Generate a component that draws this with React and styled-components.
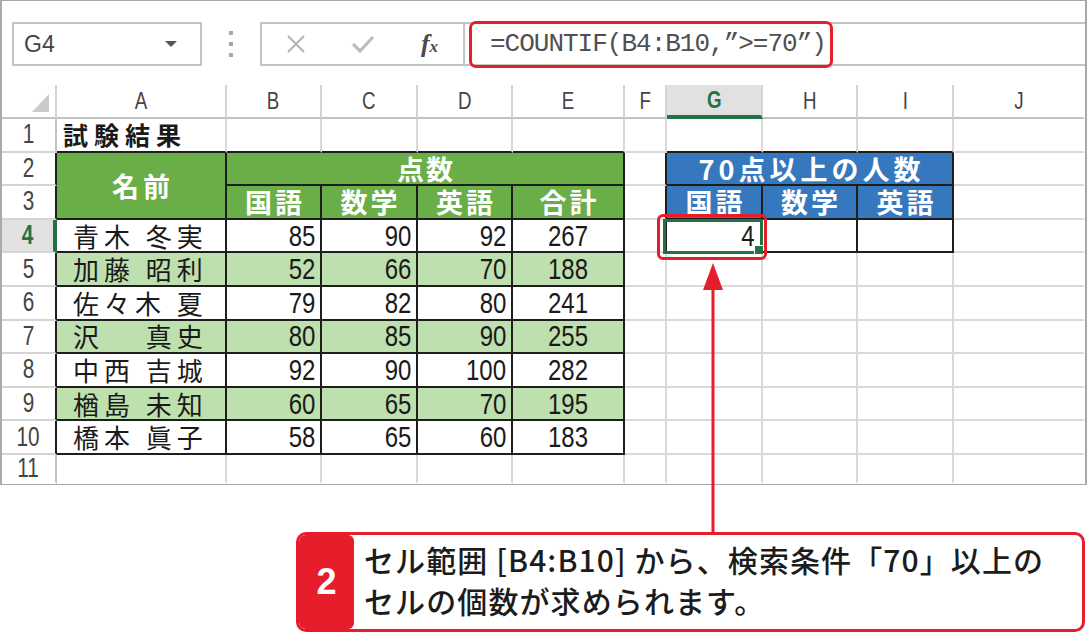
import React from 'react';
import styled, { createGlobalStyle } from 'styled-components';

const GRID = '#d9d9d9';
const INK = '#1e1e1e';
const XL_GREEN = '#217346';
const RED = '#e61e2b';
const GREEN = '#6aae47';
const LIGHT = '#bedfae';
const BLUE = '#3678be';

const GlobalStyle = createGlobalStyle`
  html, body {
    margin: 0;
    padding: 0;
    background: #fff;
  }
  body {
    font-family: "Noto Sans CJK JP", "Noto Sans", sans-serif;
  }
  * {
    box-sizing: border-box;
  }
`;

const Page = styled.div`
  position: relative;
  width: 1087px;
  height: 633px;
  overflow: hidden;
  background: #fff;
`;

const Window = styled.div`
  width: 1087px;
  height: 485px;
  border: 1px solid #a8a8a8;
  border-left: 2px solid #a3aea6;
  border-right: 2px solid #a8a8a8;
  display: flex;
  flex-direction: column;
`;

/* ---------- formula bar ---------- */

const FormulaBar = styled.div`
  display: flex;
  align-items: center;
  height: 44px;
  margin-top: 21px;
  padding-left: 10px;
`;

const NameBox = styled.div`
  width: 190px;
  height: 44px;
  border: 2px solid #c4c4c4;
  display: flex;
  align-items: center;
  justify-content: space-between;
  padding: 0 23px 0 10px;
  font-family: "Liberation Sans", Arial, sans-serif;
  font-size: 23px;
  color: #444;
`;

const Caret = styled.span`
  width: 0;
  height: 0;
  border-left: 6px solid transparent;
  border-right: 6px solid transparent;
  border-top: 6px solid #555;
`;

const Grip = styled.div`
  width: 58px;
  display: flex;
  flex-direction: column;
  align-items: center;
  gap: 7px;
`;

const GripDot = styled.span`
  width: 4px;
  height: 4px;
  background: #a6a6a6;
`;

const FxBox = styled.div`
  width: 205px;
  height: 44px;
  border: 2px solid #c4c4c4;
  display: flex;
  align-items: center;
`;

const FxSlot = styled.div`
  width: 68px;
  display: flex;
  justify-content: center;
  align-items: center;
`;

const FxLabel = styled.span`
  font-family: "Liberation Serif", "Times New Roman", serif;
  font-style: italic;
  font-weight: 700;
  font-size: 26px;
  color: #4a4a4a;

  small {
    font-size: 17px;
  }
`;

const FormulaInput = styled.div`
  flex: 1;
  height: 44px;
  border-top: 2px solid #c4c4c4;
  border-bottom: 2px solid #c4c4c4;
  display: flex;
  align-items: center;
  padding-left: 4px;
`;

const FormulaMark = styled.div`
  width: 364px;
  height: 47px;
  flex-shrink: 0;
  border: 3px solid ${RED};
  border-radius: 7px;
  display: flex;
  align-items: center;
  padding-left: 18px;
  font-family: "Liberation Mono", "Courier New", monospace;
  font-size: 26px;
  letter-spacing: -1px;
  color: #505050;
  white-space: nowrap;
`;

/* ---------- sheet ---------- */

const Sheet = styled.div`
  display: grid;
  grid-template-columns: 55px 170px 95px 96px 95px 112px 42px 96px 95px 96px 131px;
  grid-template-rows: 34px repeat(10, 33.6px) 29px;
  margin-top: 19px;
  color: #222;
`;

const Corner = styled.div`
  display: flex;
  align-items: flex-end;
  justify-content: flex-end;
  padding: 0 6px 5px 0;
  border-right: 2px solid #d4d4d4;
  border-bottom: 2px solid #c2c2c2;

  &::after {
    content: '';
    width: 0;
    height: 0;
    border-left: 17px solid transparent;
    border-bottom: 18px solid #cacaca;
  }
`;

const ColHead = styled.div`
  display: flex;
  align-items: center;
  justify-content: center;
  background: ${({ $active }) => ($active ? '#e1e1e1' : '#fff')};
  border-right: 2px solid ${({ $last }) => ($last ? 'transparent' : '#d4d4d4')};
  border-bottom: ${({ $active }) => ($active ? `4px solid ${XL_GREEN}` : '2px solid #c2c2c2')};
  color: ${({ $active }) => ($active ? XL_GREEN : '#444')};
  font-family: "Liberation Sans", Arial, sans-serif;
  font-weight: ${({ $active }) => ($active ? 700 : 400)};
  font-size: 24px;
`;

const RowHead = styled.div`
  display: flex;
  align-items: center;
  justify-content: center;
  background: ${({ $active }) => ($active ? '#e1e1e1' : '#fff')};
  border-bottom: 2px solid ${({ $b = '#d4d4d4' }) => $b};
  border-right: ${({ $active, $r = '#c2c2c2' }) => ($active ? `4px solid ${XL_GREEN}` : `2px solid ${$r}`)};
  color: ${({ $active }) => ($active ? XL_GREEN : '#444')};
  font-family: "Liberation Sans", Arial, sans-serif;
  font-weight: ${({ $active }) => ($active ? 700 : 400)};
  font-size: 27px;
`;

const Narrow = styled.span`
  display: inline-block;
  line-height: 1;
  transform: scaleX(${({ $x = 0.77 }) => $x});
`;

const Cell = styled.div`
  grid-column: span ${({ $span = 1 }) => $span};
  grid-row: span ${({ $rows = 1 }) => $rows};
  position: relative;
  display: flex;
  align-items: center;
  justify-content: ${({ $align = 'flex-start' }) => $align};
  padding: 0 ${({ $pr = 0 }) => $pr}px 0 ${({ $pl = 0 }) => $pl}px;
  background: ${({ $bg = '#fff' }) => $bg};
  border-right: 2px solid ${({ $r = GRID }) => $r};
  border-bottom: 2px solid ${({ $b = GRID }) => $b};
  white-space: nowrap;
  min-width: 0;
`;

const Title = styled.span`
  font-weight: 700;
  font-size: 25px;
  line-height: 1;
  letter-spacing: 6px;
  color: #1a1a1a;
`;

const HeadText = styled.span`
  font-weight: 700;
  font-size: 27px;
  line-height: 1;
  color: #fff;
  letter-spacing: ${({ $ls = 3 }) => $ls}px;
  padding-left: ${({ $ls = 3 }) => $ls}px;
`;

const Name = styled.span`
  font-size: 26px;
  line-height: 1;
  letter-spacing: 5px;
  color: #1a1a1a;
`;

const Num = styled.span`
  display: inline-block;
  font-family: "Liberation Sans", Arial, sans-serif;
  font-size: 30px;
  line-height: 1;
  color: #1a1a1a;
  transform: scaleX(0.8);
  transform-origin: ${({ $origin = 'right' }) => $origin} center;
`;

/* ---------- annotations ---------- */

const Selection = styled.div`
  position: absolute;
  z-index: 1;
  left: -4px;
  top: -1px;
  right: -2px;
  bottom: -3px;
  border: 3px solid ${XL_GREEN};
  pointer-events: none;
`;

const FillHandle = styled.div`
  position: absolute;
  right: -3px;
  bottom: -3px;
  width: 9px;
  height: 9px;
  background: ${XL_GREEN};
  border-left: 1px solid #fff;
  border-top: 1px solid #fff;
`;

const CellMark = styled.div`
  position: absolute;
  z-index: 2;
  left: -10px;
  top: -6px;
  right: -6px;
  bottom: -9px;
  border: 3px solid ${RED};
  border-radius: 6px;
  pointer-events: none;
`;

const Pointer = styled.svg`
  position: absolute;
  z-index: 3;
  left: 700px;
  top: 261px;
`;

const Callout = styled.div`
  display: flex;
  width: 789px;
  height: 100px;
  margin: 47px 2px 0 auto;
  border: 3px solid ${RED};
  border-radius: 10px;
  overflow: hidden;
  background: #fff;
`;

const StepBadge = styled.div`
  width: 55px;
  flex-shrink: 0;
  background: ${RED};
  border-radius: 0 6px 6px 0;
  color: #fff;
  display: flex;
  align-items: center;
  justify-content: center;
  font-family: "Liberation Sans", Arial, sans-serif;
  font-weight: 700;
  font-size: 36px;
`;

const CalloutText = styled.p`
  margin: 0;
  align-self: center;
  padding: 0 0 4px 10px;
  font-family: "Noto Sans CJK JP", "Noto Sans", sans-serif;
  font-weight: 500;
  font-size: 30px;
  line-height: 41px;
  letter-spacing: 1.1px;
  color: #1c1c1c;
  white-space: nowrap;
`;

const columns = ['A', 'B', 'C', 'D', 'E', 'F', 'G', 'H', 'I', 'J'];

const students = [
  ['青木 冬実', 85, 90, 92, 267],
  ['加藤 昭利', 52, 66, 70, 188],
  ['佐々木 夏', 79, 82, 80, 241],
  ['沢　 真史', 80, 85, 90, 255],
  ['中西 吉城', 92, 90, 100, 282],
  ['楢島 未知', 60, 65, 70, 195],
  ['橋本 眞子', 58, 65, 60, 183],
];

const CrossIcon = () => (
  <svg width="22" height="18" viewBox="0 0 22 18">
    <path d="M3 1 L19 17 M19 1 L3 17" stroke="#b4b4b4" strokeWidth="2" fill="none" />
  </svg>
);

const CheckIcon = () => (
  <svg width="24" height="20" viewBox="0 0 24 20">
    <path d="M2 10 L9 17 L22 3" stroke="#bcbcbc" strokeWidth="3.2" fill="none" />
  </svg>
);

const StudentRow = ({ row, index }) => {
  const [name, ...scores] = row;
  const n = index + 4;
  const bg = index % 2 === 1 ? LIGHT : '#fff';
  const first = index === 0;
  return (
    <>
      <RowHead $r={INK} $active={first}>
        <Narrow>{n}</Narrow>
      </RowHead>
      <Cell $bg={bg} $r={INK} $b={INK} $pl={16}>
        <Name>{name}</Name>
      </Cell>
      {scores.slice(0, 3).map((s, i) => (
        <Cell key={i} $bg={bg} $r={INK} $b={INK} $align="flex-end" $pr={5}>
          <Num>{s}</Num>
        </Cell>
      ))}
      <Cell $bg={bg} $r={INK} $b={INK} $align="center">
        <Num $origin="center">{scores[3]}</Num>
      </Cell>
      <Cell $r={first ? INK : GRID} />
      {first ? (
        <>
          <Cell $r={INK} $b={INK} $align="flex-end" $pr={6}>
            <Num>4</Num>
            <Selection>
              <FillHandle />
            </Selection>
            <CellMark />
          </Cell>
          <Cell $r={INK} $b={INK} />
          <Cell $r={INK} $b={INK} />
        </>
      ) : (
        <>
          <Cell />
          <Cell />
          <Cell />
        </>
      )}
      <Cell $r="transparent" />
    </>
  );
};

const App = () => (
  <Page>
    <GlobalStyle />
    <Window>
      <FormulaBar>
        <NameBox>
          <span>G4</span>
          <Caret />
        </NameBox>
        <Grip>
          <GripDot />
          <GripDot />
          <GripDot />
        </Grip>
        <FxBox>
          <FxSlot>
            <CrossIcon />
          </FxSlot>
          <FxSlot>
            <CheckIcon />
          </FxSlot>
          <FxSlot>
            <FxLabel>
              f<small>x</small>
            </FxLabel>
          </FxSlot>
        </FxBox>
        <FormulaInput>
          <FormulaMark>=COUNTIF(B4:B10,”&gt;=70”)</FormulaMark>
        </FormulaInput>
      </FormulaBar>

      <Sheet>
        <Corner />
        {columns.map((c) => (
          <ColHead key={c} $active={c === 'G'} $last={c === 'J'}>
            <Narrow $x={0.78}>{c}</Narrow>
          </ColHead>
        ))}

        {/* row 1 */}
        <RowHead>
          <Narrow>1</Narrow>
        </RowHead>
        <Cell $b={INK} $pl={6}>
          <Title>試験結果</Title>
        </Cell>
        <Cell $b={INK} />
        <Cell $b={INK} />
        <Cell $b={INK} />
        <Cell $b={INK} />
        <Cell />
        <Cell $b={INK} />
        <Cell $b={INK} />
        <Cell $b={INK} />
        <Cell $r="transparent" />

        {/* row 2 */}
        <RowHead $r={INK}>
          <Narrow>2</Narrow>
        </RowHead>
        <Cell $rows={2} $bg={GREEN} $r={INK} $b={INK} $align="center">
          <HeadText $ls={4}>名前</HeadText>
        </Cell>
        <Cell $span={4} $bg={GREEN} $r={INK} $b={INK} $align="center">
          <HeadText $ls={2}>点数</HeadText>
        </Cell>
        <Cell $r={INK} />
        <Cell $span={3} $bg={BLUE} $r={INK} $b={INK} $align="center">
          <HeadText $ls={4}>70点以上の人数</HeadText>
        </Cell>
        <Cell $r="transparent" />

        {/* row 3 */}
        <RowHead $r={INK}>
          <Narrow>3</Narrow>
        </RowHead>
        {['国語', '数学', '英語', '合計'].map((t) => (
          <Cell key={t} $bg={GREEN} $r={INK} $b={INK} $align="center">
            <HeadText>{t}</HeadText>
          </Cell>
        ))}
        <Cell $r={INK} />
        {['国語', '数学', '英語'].map((t) => (
          <Cell key={t} $bg={BLUE} $r={INK} $b={INK} $align="center">
            <HeadText>{t}</HeadText>
          </Cell>
        ))}
        <Cell $r="transparent" />

        {students.map((row, i) => (
          <StudentRow key={row[0]} row={row} index={i} />
        ))}

        {/* row 11 */}
        <RowHead $b="transparent">
          <Narrow>11</Narrow>
        </RowHead>
        {columns.map((c) => (
          <Cell key={c} $b="transparent" $r={c === 'J' ? 'transparent' : GRID} />
        ))}
      </Sheet>
    </Window>

    <Callout>
      <StepBadge>2</StepBadge>
      <CalloutText>
        セル範囲 [B4:B10] から、検索条件「70」以上の
        <br />
        セルの個数が求められます。
      </CalloutText>
    </Callout>

    <Pointer width="26" height="272" viewBox="0 0 26 272">
      <polygon points="13,2 3,29 23,29" fill={RED} />
      <rect x="11.5" y="27" width="3" height="245" fill={RED} />
    </Pointer>
  </Page>
);

export default App;
